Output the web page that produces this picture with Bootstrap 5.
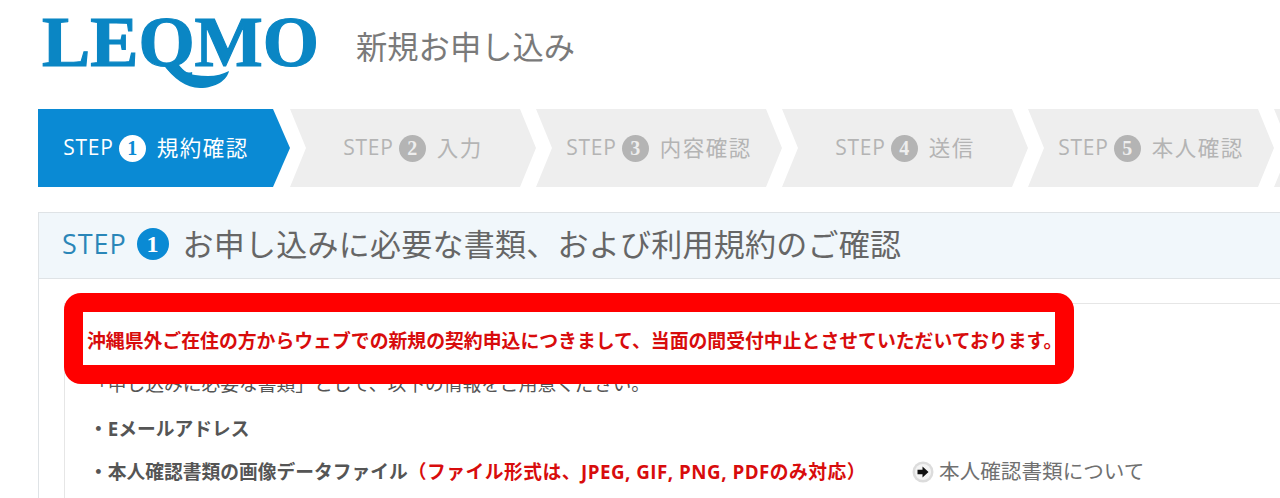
<!DOCTYPE html>
<html lang="ja">
  <head>
    <meta charset="UTF-8" />
    <meta name="viewport" content="width=device-width, initial-scale=1.0" />
    <title>新規お申し込み</title>
    <link href="https://cdn.jsdelivr.net/npm/bootstrap@5.3.0/dist/css/bootstrap.min.css" rel="stylesheet" />
    <style>
      body {
        font-family: "Open Sans", "Noto Sans CJK JP", sans-serif;
        color: #555;
        background: #fff;
      }
      .page-wrap {
        height: 100vh;
        overflow: hidden;
        padding-left: 38px;
      }
      .site-head {
        height: 109px;
      }
      .logo-box {
        width: 290px;
        height: 108px;
        margin-left: 2px;
      }
      .page-name {
        margin: 0 0 14px 26px;
        font-size: 31.3px;
        font-weight: 400;
        color: #7a7a7a;
        line-height: 1;
      }
      .step-bar {
        height: 78px;
        width: 1300px;
      }
      .step-item {
        flex: 0 0 246px;
        background: #eeeeee;
        color: #b4b4b4;
        clip-path: polygon(0 0, calc(100% - 16px) 0, 100% 50%, calc(100% - 16px) 100%, 0 100%, 16px 50%);
        font-size: 21.5px;
        letter-spacing: 1.5px;
      }
      .step-item.is-first {
        flex-basis: 252px;
        background: #0a8ad4;
        color: #fff;
        clip-path: polygon(0 0, calc(100% - 17px) 0, 100% 50%, calc(100% - 17px) 100%, 0 100%);
        padding-right: 16px;
      }
      .step-label {
        font-size: 21px;
        letter-spacing: 0.8px;
        margin-right: 5px;
      }
      .step-num {
        width: 27px;
        height: 27px;
        border-radius: 50%;
        background: #b4b4b4;
        color: #eee;
        font-size: 20px;
        font-weight: 700;
        letter-spacing: 0;
        line-height: 27px;
        text-align: center;
        margin-right: 11px;
        font-family: "Liberation Serif", serif;
      }
      .is-first .step-num {
        background: #fff;
        color: #0a8ad4;
      }
      .main-card {
        width: 1300px;
        margin-top: 25px;
        border: 1px solid #dfe3e6;
      }
      .main-card > .card-header {
        height: 66px;
        padding: 0 0 3px 23px;
        background: #f1f7fb;
        border-bottom: 1px solid #dfe3e6;
      }
      .head-step {
        font-size: 27px;
        letter-spacing: 0.9px;
        color: #2a86b8;
        margin-right: 10px;
      }
      .head-num {
        width: 32px;
        height: 32px;
        border-radius: 50%;
        background: #0a8ad4;
        color: #fff;
        font: 700 24px/32px "Liberation Serif", serif;
        text-align: center;
        margin-right: 14px;
      }
      .head-title {
        font-size: 31px;
        font-weight: 400;
        color: #666;
        margin: 0;
        line-height: 1;
        letter-spacing: 0.25px;
      }
      .main-card > .card-body {
        padding: 24px 0 0 25px;
      }
      .doc-box {
        position: relative;
        height: 300px;
        border: 1px solid #e6e6e6;
        border-right: 0;
        padding: 67px 0 0 24px;
        font-size: 18.75px;
      }
      .doc-box p {
        margin: 0 0 18px;
        height: 25px;
        line-height: 25px;
      }
      .doc-box .doc-intro {
        margin-bottom: 20px;
      }
      .notice-box {
        position: absolute;
        left: -1px;
        top: -11px;
        width: 1010px;
        height: 91px;
        border: 19px solid #ff0000;
        border-radius: 17px;
        background: #fff;
        color: #d80c0c;
        font-size: 18.85px;
        font-weight: 700;
        white-space: nowrap;
        padding: 5px 0 0 4px;
      }
      .doc-req {
        font-weight: 700;
        color: #555;
      }
      .doc-red {
        color: #d80c0c;
        letter-spacing: 0.5px;
      }
      .arrow-icon {
        width: 22px;
        height: 22px;
        margin-left: 46px;
        margin-right: 5px;
      }
      .doc-link {
        font-size: 20.6px;
        font-weight: 400;
        color: #707070;
      }
    </style>
  </head>

  <body>
    <div class="page-wrap">
      <!-- Header -->
      <div class="site-head d-flex align-items-center">
        <div class="logo-box flex-shrink-0">
          <svg width="290" height="108" viewBox="0 0 290 108">
            <text x="2" y="65" font-family="Liberation Serif, serif" font-weight="700" font-size="72" fill="#0a86c4" stroke="#0a86c4" stroke-width="1.2" textLength="277" lengthAdjust="spacingAndGlyphs">LEQMO</text>
            <path d="M122 62C136 70 150 75 168 75C176 75 183 73 189 70C187 79 176 87 160 87C146 87 134 78 122 62Z" fill="#0a86c4" />
          </svg>
        </div>
        <h1 class="page-name">新規お申し込み</h1>
      </div>

      <!-- Steps -->
      <div class="step-bar d-flex">
        <div class="step-item is-first d-flex align-items-center justify-content-center"><span class="step-label">STEP</span><span class="step-num">1</span>規約確認</div>
        <div class="step-item d-flex align-items-center justify-content-center"><span class="step-label">STEP</span><span class="step-num">2</span>入力</div>
        <div class="step-item d-flex align-items-center justify-content-center"><span class="step-label">STEP</span><span class="step-num">3</span>内容確認</div>
        <div class="step-item d-flex align-items-center justify-content-center"><span class="step-label">STEP</span><span class="step-num">4</span>送信</div>
        <div class="step-item d-flex align-items-center justify-content-center"><span class="step-label">STEP</span><span class="step-num">5</span>本人確認</div>
        <div class="step-item d-flex align-items-center justify-content-center"></div>
      </div>

      <!-- Step 1 -->
      <div class="card main-card rounded-0">
        <div class="card-header rounded-0 d-flex align-items-center">
          <span class="head-step">STEP</span><span class="head-num">1</span>
          <h2 class="head-title">お申し込みに必要な書類、および利用規約のご確認</h2>
        </div>
        <div class="card-body">
          <div class="doc-box">
            <div class="notice-box d-flex align-items-center">沖縄県外ご在住の方からウェブでの新規の契約申込につきまして、当面の間受付中止とさせていただいております。</div>
            <p class="doc-intro">「申し込みに必要な書類」として、以下の情報をご用意ください。</p>
            <p class="doc-req">・Eメールアドレス</p>
            <p class="doc-req d-flex align-items-center">
              <span>・本人確認書類の画像データファイル<span class="doc-red">（ファイル形式は、JPEG, GIF, PNG, PDFのみ対応）</span></span>
              <svg class="arrow-icon" viewBox="0 0 22 22">
                <circle cx="11" cy="11" r="10.5" fill="#dcdcdc" />
                <circle cx="11" cy="11" r="8" fill="#f4f4f4" />
                <path d="M5.5 8.8H10.5V5.5L16.5 11L10.5 16.5V13.2H5.5Z" fill="#111" />
              </svg>
              <span class="doc-link">本人確認書類について</span>
            </p>
          </div>
        </div>
      </div>
    </div>

    <script src="https://cdn.jsdelivr.net/npm/bootstrap@5.3.0/dist/js/bootstrap.bundle.min.js"></script>
  </body>
</html>
